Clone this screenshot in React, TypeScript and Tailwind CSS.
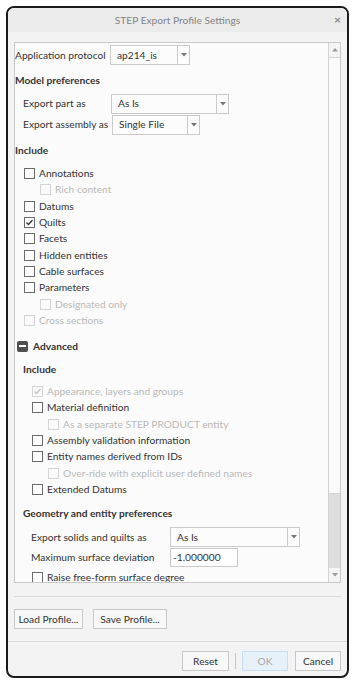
import { FC, ReactNode } from 'react';

const font = { fontFamily: 'Lato, "Liberation Sans", sans-serif' };

interface CheckProps {
  label: string;
  checked?: boolean;
  disabled?: boolean;
  indent: string;
  tall?: boolean;
}

// rows alternate 16/17px so that three rows take 49px, like the dialog
const Check: FC<CheckProps> = ({ label, checked, disabled, indent, tall }) => {
  return (
    <div className={`flex items-center shrink-0 ${tall ? 'h-[17px]' : 'h-[16px]'} ${indent}`}>
      <span
        className={`w-[11px] h-[11px] border flex items-center justify-center shrink-0 ${
          disabled ? 'border-[#d4d4d4] bg-[#fafafa]' : 'border-[#6b6b6b] bg-white'
        }`}
      >
        {checked && (
          <svg width="9" height="9" viewBox="0 0 9 9">
            <path
              d="M1.5 4.5 L3.5 6.5 L7.5 2"
              fill="none"
              stroke={disabled ? '#c4c4c4' : '#333'}
              strokeWidth="1.3"
            />
          </svg>
        )}
      </span>
      <span className={`ml-[4px] whitespace-nowrap ${disabled ? 'text-[#b9b9b9]' : 'text-[#333]'}`}>{label}</span>
    </div>
  );
};

const Arrow: FC = () => (
  <svg width="6" height="4" viewBox="0 0 6 4">
    <path d="M0 0 L6 0 L3 3.5 Z" fill="#777" />
  </svg>
);

interface SelectProps {
  value: string;
  width: string;
}

const Select: FC<SelectProps> = ({ value, width }) => {
  return (
    <div className={`${width} h-[20px] border border-[#cacaca] bg-[#fcfcfc] flex items-center`}>
      <span className="flex-1 pl-[6px] text-[#333] whitespace-nowrap">{value}</span>
      <span className="w-[12px] h-full border-l border-[#cacaca] flex items-center justify-center">
        <Arrow />
      </span>
    </div>
  );
};

const Heading: FC<{ children: ReactNode; indent?: string }> = ({ children, indent = '' }) => (
  <div className={`font-bold text-[#333] whitespace-nowrap ${indent}`}>{children}</div>
);

const Button: FC<{ children: ReactNode; width: string; className?: string }> = ({ children, width, className }) => (
  <button
    type="button"
    className={`${width} h-[20px] border flex items-center justify-center ${
      className ?? 'border-[#c7c7c7] bg-[#f8f8f8] text-[#333]'
    }`}
  >
    {children}
  </button>
);

export default function App() {
  return (
    <div className="w-[357px] h-[680px] bg-white pt-[6px] pl-[6px] text-[10.2px] leading-none" style={font}>
      <div className="w-[343px] h-[672px] border-2 border-[#1b1b1b] rounded-[8px] overflow-hidden flex flex-col bg-[#f3f3f3]">
        {/* title bar */}
        <div className="h-[24px] shrink-0 relative flex items-center justify-center bg-[#ebebeb] text-[#858585]">
          <span>STEP Export Profile Settings</span>
          <span className="absolute right-[6px] top-[6px] text-[12px] font-bold text-[#8a8a8a]">×</span>
        </div>

        <div className="px-[6px] pt-[10px]">
          <div className="h-[541px] border border-[#c9c9c9] bg-[#fbfbfb] flex overflow-hidden">
            {/* content */}
            <div className="flex-1 flex flex-col overflow-hidden">
              <div className="h-[24px] flex items-center shrink-0">
                <span className="w-[95px] text-[#333] whitespace-nowrap">Application protocol</span>
                <Select value="ap214_is" width="w-[80px]" />
              </div>
              <div className="h-[26px] flex items-center shrink-0">
                <Heading>Model preferences</Heading>
              </div>
              <div className="h-[21px] flex items-center pl-[8px] shrink-0">
                <span className="w-[88px] text-[#333] whitespace-nowrap">Export part as</span>
                <Select value="As Is" width="w-[118px]" />
              </div>
              <div className="h-[21px] flex items-center pl-[8px] shrink-0">
                <span className="w-[89px] text-[#333] whitespace-nowrap">Export assembly as</span>
                <Select value="Single File" width="w-[88px]" />
              </div>
              <div className="h-[30px] flex items-center shrink-0">
                <Heading>Include</Heading>
              </div>
              <Check label="Annotations" indent="pl-[9px]" />
              <Check label="Rich content" disabled tall indent="pl-[25px]" />
              <Check label="Datums" indent="pl-[9px]" />
              <Check label="Quilts" checked indent="pl-[9px]" />
              <Check label="Facets" tall indent="pl-[9px]" />
              <Check label="Hidden entities" indent="pl-[9px]" />
              <Check label="Cable surfaces" indent="pl-[9px]" />
              <Check label="Parameters" tall indent="pl-[9px]" />
              <Check label="Designated only" disabled indent="pl-[25px]" />
              <Check label="Cross sections" disabled indent="pl-[9px]" />

              <div className="mt-[10px] h-[16px] flex items-center pl-[2px] shrink-0">
                <span className="w-[11px] h-[11px] rounded-[2px] bg-[#4f4f4f] flex items-center justify-center">
                  <span className="w-[7px] h-[2px] bg-white" />
                </span>
                <span className="ml-[5px] font-bold text-[#333]">Advanced</span>
              </div>
              <div className="mt-[7px] h-[16px] flex items-center shrink-0">
                <Heading indent="pl-[8px]">Include</Heading>
              </div>
              <div className="mt-[6px] shrink-0" />
              <Check label="Appearance, layers and groups" checked disabled indent="pl-[17px]" />
              <Check label="Material definition" tall indent="pl-[17px]" />
              <Check label="As a separate STEP PRODUCT entity" disabled indent="pl-[33px]" />
              <Check label="Assembly validation information" indent="pl-[17px]" />
              <Check label="Entity names derived from IDs" tall indent="pl-[17px]" />
              <Check label="Over-ride with explicit user defined names" disabled indent="pl-[33px]" />
              <Check label="Extended Datums" indent="pl-[17px]" />

              <div className="mt-[8px] h-[16px] flex items-center shrink-0">
                <Heading indent="pl-[8px]">Geometry and entity preferences</Heading>
              </div>
              <div className="mt-[6px] h-[20px] flex items-center pl-[16px] shrink-0">
                <span className="w-[139px] text-[#333] whitespace-nowrap">Export solids and quilts as</span>
                <Select value="As Is" width="w-[130px]" />
              </div>
              <div className="mt-[1px] h-[19px] flex items-center pl-[16px] shrink-0">
                <span className="w-[139px] text-[#333] whitespace-nowrap">Maximum surface deviation</span>
                <div className="w-[68px] h-[19px] border border-[#cacaca] bg-white flex items-center pl-[2px] text-[#333]">
                  -1.000000
                </div>
              </div>
              <div className="mt-[2px] shrink-0">
                <Check label="Raise free-form surface degree" indent="pl-[17px]" />
              </div>
            </div>

            {/* scrollbar */}
            <div className="w-[12px] shrink-0 flex flex-col border-l border-[#d2d2d2] bg-[#f4f4f4]">
              <div className="h-[14px] flex items-center justify-center shrink-0">
                <svg width="6" height="4" viewBox="0 0 6 4">
                  <path d="M0 3.5 L6 3.5 L3 0 Z" fill="#9a9a9a" />
                </svg>
              </div>
              <div className="h-[437px] bg-[#fafafa] border-y border-[#d2d2d2] shrink-0" />
              <div className="flex-1 bg-[#dedede]" />
              <div className="h-[14px] flex items-center justify-center shrink-0 bg-[#f4f4f4]">
                <svg width="6" height="4" viewBox="0 0 6 4">
                  <path d="M0 0 L6 0 L3 3.5 Z" fill="#9a9a9a" />
                </svg>
              </div>
            </div>
          </div>

          <div className="mt-[13px] h-px bg-[#d9d9d9]" />
          <div className="mt-[12px] flex gap-[10px]">
            <Button width="w-[69px]">Load Profile...</Button>
            <Button width="w-[74px]">Save Profile...</Button>
          </div>
        </div>

        <div className="mt-[12px] h-px bg-[#d9d9d9] shrink-0" />
        <div className="mt-[9px] flex justify-end items-center pr-[6px]">
          <Button width="w-[47px]">Reset</Button>
          <span className="mx-[6px] w-px h-[16px] bg-[#c4c4c4]" />
          <Button width="w-[46px]" className="border-[#c4dff5] bg-[#e6f1fa] text-[#a8a8a8]">
            OK
          </Button>
          <span className="w-[7px]" />
          <Button width="w-[46px]">Cancel</Button>
        </div>
      </div>
    </div>
  );
}
